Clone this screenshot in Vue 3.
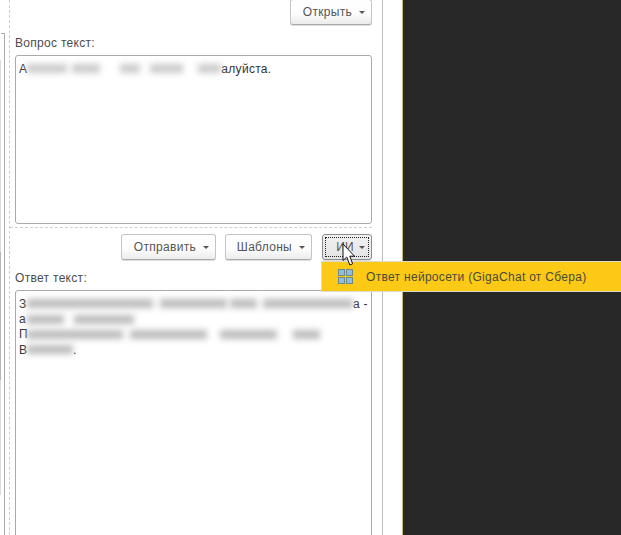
<script setup>
const answerLines = [
  { lead: 'З', bars: [[126, 7], [67, 3], [27, 6], [90, 0]], tail: 'а -' },
  { lead: 'а', bars: [[37, 10], [60, 0]], tail: '' },
  { lead: 'П', bars: [[96, 7], [77, 13], [57, 16], [27, 0]], tail: '' },
  { lead: 'В', bars: [[46, 0]], tail: '.' },
]
const questionBars = [[40, 5], [28, 20], [20, 10], [33, 15], [23, 0]]
</script>

<template>
  <div class="page">
    <div class="work">
      <div class="left">
        <div class="scroll"><div class="thumb"></div></div>
        <div class="leftbox"></div>
      </div>
      <div class="content">
        <div class="row first">
          <button class="btn open">Открыть<i class="caret"></i></button>
        </div>
        <div class="label q">Вопрос текст:</div>
        <div class="area qa">
          <div class="line">
            <span>А</span>
            <span v-for="(b, i) in questionBars" :key="i" class="blur" :style="{ width: b[0] + 'px', marginRight: b[1] + 'px' }"></span>
            <span>алуйста.</span>
          </div>
        </div>
        <div class="dash"></div>
        <div class="row actions">
          <button class="btn send">Отправить<i class="caret"></i></button>
          <button class="btn tpl">Шаблоны<i class="caret"></i></button>
          <button class="btn ai"><span class="focus">ИИ<i class="caret"></i></span></button>
        </div>
        <div class="label a">Ответ текст:</div>
        <div class="area aa">
          <div v-for="(l, n) in answerLines" :key="n" class="line tall">
            <span class="lead">{{ l.lead }}</span>
            <span v-for="(b, i) in l.bars" :key="i" class="blur dark" :style="{ width: b[0] + 'px', marginRight: b[1] + 'px' }"></span>
            <span v-if="l.tail">{{ l.tail }}</span>
          </div>
        </div>
      </div>
    </div>
    <div class="dark-side"></div>

    <div class="menu">
      <svg class="grid" width="15" height="15" viewBox="0 0 15 15">
        <rect x="0.5" y="0.5" width="6" height="6" fill="#8fbce2" stroke="#6f8a80" />
        <rect x="8.5" y="0.5" width="6" height="6" fill="#8fbce2" stroke="#6f8a80" />
        <rect x="0.5" y="8.5" width="6" height="6" fill="#8fbce2" stroke="#6f8a80" />
        <rect x="8.5" y="8.5" width="6" height="6" fill="#8fbce2" stroke="#6f8a80" />
      </svg>
      <span>Ответ нейросети (GigaChat от Сбера)</span>
    </div>

    <svg class="cursor" width="14" height="24" viewBox="0 0 14 24">
      <path d="M1 1 L1 17.5 L4.8 14 L7.8 22 L10.6 20.8 L7.8 13.2 L12.5 13.2 Z" fill="#fff" stroke="#111" stroke-width="1" />
    </svg>
  </div>
</template>

<style>
html, body { margin: 0; background: #fff; }
</style>

<style scoped>
.page {
  position: relative;
  display: flex;
  width: 621px;
  height: 535px;
  overflow: hidden;
  font-family: "Liberation Sans", Arial, sans-serif;
  font-size: 12px;
  letter-spacing: 0.3px;
  color: #4c4c4c;
}
.work {
  display: flex;
  width: 402px;
  flex: none;
  background: #fff;
}
.left {
  display: flex;
  width: 5px;
  flex: none;
  padding-top: 33px;
  box-sizing: border-box;
  height: 535px;
}
.scroll {
  width: 1px;
  margin-top: 27px;
  height: 435px;
  background: #dcdcdc;
}
.thumb {
  width: 1px;
  height: 128px;
  margin-top: 192px;
  background: #b4b4b4;
}
.leftbox {
  flex: 1;
  border-top: 1px solid #aaa;
  border-right: 1px solid #aaa;
}
.content {
  width: 374px;
  flex: none;
  margin-left: 4px;
  box-sizing: border-box;
  border-left: 1px dashed #cfcfcf;
  border-right: 1px solid #bbb;
  padding: 0 10px 0 5px;
  height: 535px;
  overflow: hidden;
}
.row {
  display: flex;
  justify-content: flex-end;
}
.first {
  margin-top: -1px;
  height: 26px;
}
.btn {
  box-sizing: border-box;
  display: flex;
  align-items: center;
  justify-content: flex-end;
  height: 26px;
  padding: 0 6px 0 0;
  border: 1px solid #c4c4c4;
  border-bottom-color: #aaa;
  border-radius: 3px;
  background: linear-gradient(#fff 0%, #fdfdfd 55%, #ececec 100%);
  box-shadow: 0 1px 0 #ddd;
  font: inherit;
  letter-spacing: inherit;
  font-size: 12px;
  color: #555;
}
.caret {
  display: block;
  width: 0;
  height: 0;
  margin-left: 7px;
  border-left: 3px solid transparent;
  border-right: 3px solid transparent;
  border-top: 3px solid #555;
}
.open { width: 82px; }
.send { width: 95px; }
.tpl { width: 87px; margin-left: 9px; }
.ai {
  width: 50px;
  margin-left: 10px;
  padding: 2px;
  border-color: #8c8c8c;
  background: linear-gradient(#f1f1f1, #e4e4e4);
}
.focus {
  flex: 1;
  align-self: stretch;
  display: flex;
  align-items: center;
  justify-content: flex-end;
  padding-right: 3px;
  border: 1px dotted #222;
}
.focus .caret { margin-left: 5px; }
.label {
  line-height: 14px;
}
.q { margin-top: 11px; }
.a { margin-top: 11px; }
.area {
  box-sizing: border-box;
  margin-top: 5px;
  border: 1px solid #aaa;
  border-radius: 3px;
  padding: 5px 3px;
  color: #333;
}
.qa { height: 169px; }
.aa { height: 260px; }
.line {
  display: flex;
  align-items: center;
  height: 15px;
  white-space: nowrap;
}
.tall { height: 15.4px; }
.lead { width: 8px; flex: none; }
.blur {
  display: block;
  flex: none;
  height: 9px;
  background: #cbcbcb;
  filter: blur(3px);
}
.blur.dark { background: #bcbcbc; }
.dash {
  height: 0;
  margin: 3px 0 6px -5px;
  border-top: 1px dashed #cfcfcf;
}
.actions { height: 26px; }
.dark-side {
  flex: 1;
  box-sizing: border-box;
  background: #282828;
  border-left: 1px solid #c4b486;
  box-shadow: inset 2px 0 0 #2e2a14;
}
.menu {
  position: absolute;
  left: 321px;
  top: 261px;
  width: 300px;
  height: 31px;
  box-sizing: border-box;
  display: flex;
  align-items: center;
  padding-left: 16px;
  background: #fcc917;
  border: 1px solid #dcdccc;
  border-right: none;
  color: #4a4a3a;
  font-size: 12px;
}
.grid {
  flex: none;
  margin-right: 13px;
}
.cursor {
  position: absolute;
  left: 342px;
  top: 243px;
}
</style>
